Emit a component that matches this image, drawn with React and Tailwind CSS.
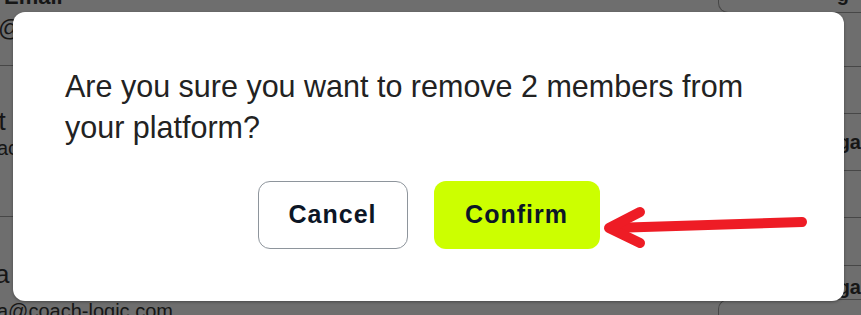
import React from "react";

export default function App() {
  return (
    <div className="relative w-[861px] h-[315px] overflow-hidden bg-[#6e6e6e] font-['Liberation_Sans',Arial,sans-serif] text-[#161616]">
      {/* background page (dimmed table) */}
      <div className="flex w-full h-full">
        <div className="w-[723px] flex flex-col">
          <div className="shrink-0 h-[66px] border-b border-[#474747] flex flex-col">
            <div className="-mt-[14px] text-[22px] font-bold leading-[22px] pl-[4px]">Email</div>
            <div className="mt-[6px] text-[24px] leading-[28px] -ml-[2px]">@coach-logic.com</div>
          </div>
          <div className="shrink-0 h-[151px] border-b border-[#474747] flex flex-col">
            <div className="mt-[40px] text-[26px] leading-[30px] -ml-[16px]">nt</div>
            <div className="text-[20px] leading-[24px] -ml-[3px]">ach@coach-logic.com</div>
          </div>
          <div className="shrink-0 flex flex-col">
            <div className="mt-[42px] text-[26px] leading-[30px] -ml-[5px]">a</div>
            <div className="mt-[10px] text-[20px] leading-[24px] -ml-[3px]">a@coach-logic.com</div>
          </div>
        </div>
        <div className="flex-1 flex flex-col">
          <div className="shrink-0 h-[12px] border-l border-b border-[#474747] rounded-bl-[10px] text-[20px] font-bold leading-[20px] pl-[118px] -mt-[12px] box-content pt-[12px] overflow-visible">
            <span className="relative -top-[16px]">g</span>
          </div>
          <div className="shrink-0 h-[54px] border-b border-[#474747]" />
          <div className="shrink-0 h-[47px] border-b border-[#474747]" />
          <div className="shrink-0 h-[57px] border-b border-[#474747] flex items-center pl-[120px] text-[20px] font-bold">ga</div>
          <div className="shrink-0 h-[47px] border-b border-[#474747]" />
          <div className="shrink-0 h-[48px] border-b border-[#474747] flex items-end pl-[120px] text-[20px] font-bold leading-[24px]">
            <span className="translate-y-[34px]">ga</span>
          </div>
          <div className="flex-1 mt-[33px] border-l border-t border-[#474747] rounded-tl-[10px]" />
        </div>
      </div>

      {/* modal */}
      <div className="absolute left-[13px] top-[12px] w-[831px] h-[289px] bg-white rounded-[12px] shadow-[0_1px_3px_rgba(0,0,0,0.35)] pt-[54px] px-[52px] pb-[52px] flex flex-col">
        <p className="text-[30.5px] leading-[41px] text-[#222222]">
          Are you sure you want to remove 2 members from your platform?
        </p>
        <div className="mt-[33px] flex justify-center gap-[26px]">
          <button className="h-[68px] w-[150px] rounded-[12px] border border-[#8e959c] bg-white text-[25px] font-bold tracking-[1px] text-[#0c1626]">
            Cancel
          </button>
          <button className="h-[68px] w-[166px] rounded-[12px] bg-[#ccff00] text-[25px] font-bold tracking-[1px] text-[#0c1626]">
            Confirm
          </button>
        </div>
      </div>

      {/* red annotation arrow */}
      <svg className="absolute left-0 top-0" width="861" height="315" viewBox="0 0 861 315">
        <g stroke="#ee1c25" strokeWidth="10" strokeLinecap="round" strokeLinejoin="round" fill="none">
          <path d="M802 222 L612 228" />
          <path d="M640 212 L609 228 L640 243" />
        </g>
      </svg>
    </div>
  );
}
